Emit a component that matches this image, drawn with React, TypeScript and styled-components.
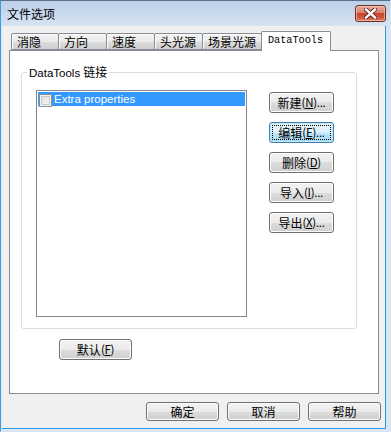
import React from "react";
import styled, { createGlobalStyle } from "styled-components";

const CJK = `"Noto Sans CJK SC", "Liberation Sans", sans-serif`;
const LATIN = `"Liberation Sans", "Noto Sans CJK SC", sans-serif`;
const MONO = `"Liberation Mono", "DejaVu Sans Mono", monospace`;

const GlobalStyle = createGlobalStyle`
  html, body { margin: 0; padding: 0; background: #ffffff; }
  body { font-family: ${CJK}; font-size: 12px; color: #000; }
  * { box-sizing: border-box; }
`;

const Window = styled.div`
  width: 391px;
  height: 432px;
  display: flex;
  flex-direction: column;
  border: 1px solid #5d6f86;
  border-left-color: #3d9ee4;
  border-right-color: #d8e4f1;
  border-bottom-color: #d8e4f1;
  background: linear-gradient(to bottom, #bcd0e7 0px, #d6e3f1 25px, #dbe6f2 100%);
`;

const TitleBar = styled.div`
  height: 25px;
  flex: none;
  display: flex;
  align-items: flex-start;
  padding: 0 4px 0 6px;
`;

const Title = styled.div`
  flex: 1;
  font-family: ${CJK};
  font-size: 12px;
  line-height: 25px;
  color: #000;
`;

const CloseButton = styled.div`
  width: 31px;
  height: 17px;
  margin-top: 4px;
  border: 1px solid #6f2e24;
  border-radius: 3px;
  background: linear-gradient(to bottom, #e9a898 0%, #d9806b 45%, #c7452c 50%, #cf5a3f 80%, #e28a6a 100%);
  box-shadow: inset 0 0 0 1px rgba(255, 220, 210, 0.55);
  display: flex;
  align-items: center;
  justify-content: center;
`;

const Client = styled.div`
  flex: 1;
  margin: 0 4px 2px 1px;
  background: #f0f0f0;
  display: flex;
  flex-direction: column;
  padding: 5px 6px 7px 7px;
  border-right: 1px solid #2f98e6;
  border-bottom: 1px solid #2f98e6;
`;

const TabStrip = styled.div`
  display: flex;
  align-items: flex-end;
  height: 19px;
  padding-left: 2px;
  flex: none;
`;

const Tab = styled.div<{ $w: number; $active?: boolean }>`
  width: ${(p) => p.$w}px;
  height: ${(p) => (p.$active ? 20 : 17)}px;
  margin-right: -1px;
  margin-bottom: ${(p) => (p.$active ? -1 : 0)}px;
  position: relative;
  z-index: ${(p) => (p.$active ? 2 : 1)};
  border: 1px solid #898c95;
  border-bottom: ${(p) => (p.$active ? "none" : "1px solid #898c95")};
  border-radius: 2px 2px 0 0;
  background: ${(p) =>
    p.$active
      ? "#ffffff"
      : "linear-gradient(to bottom, #f2f2f2 0%, #ebebeb 50%, #dddddd 50%, #cfcfcf 100%)"};
  box-shadow: ${(p) => (p.$active ? "none" : "inset 1px 1px 0 #fcfcfc")};
  padding-left: ${(p) => (p.$active ? 6 : 5)}px;
  font-family: ${(p) => (p.$active ? MONO : CJK)};
  font-size: ${(p) => (p.$active ? "10.2px" : "12px")};
  line-height: ${(p) => (p.$active ? "18px" : "15px")};
  white-space: nowrap;
  color: #000;
`;

const Panel = styled.div`
  flex: 1;
  border: 1px solid #898c95;
  background: #ffffff;
  display: flex;
  flex-direction: column;
  align-items: flex-start;
`;

const GroupBox = styled.div`
  position: relative;
  align-self: stretch;
  margin: 21px 21px 0 11px;
  border: 1px solid #d5dfe5;
  border-radius: 3px;
  padding: 17px 22px 11px 14px;
  display: flex;
  align-items: flex-start;
`;

const GroupTitle = styled.div`
  position: absolute;
  top: -9px;
  left: 5px;
  padding: 0 2px;
  background: #ffffff;
  font-family: ${LATIN};
  font-size: 11.5px;
  line-height: 15px;
  color: #000;
  white-space: nowrap;
`;

const GroupTitleCjk = styled.span`
  font-family: ${CJK};
  font-size: 12px;
`;

const ListBox = styled.div`
  width: 211px;
  height: 227px;
  border: 1px solid #828790;
  background: #ffffff;
  padding: 1px;
  flex: none;
`;

const ListRow = styled.div<{ $selected?: boolean }>`
  height: 14px;
  display: flex;
  align-items: center;
  background: ${(p) => (p.$selected ? "#3399ff" : "transparent")};
  color: ${(p) => (p.$selected ? "#ffffff" : "#000000")};
  font-family: ${LATIN};
  font-size: 11.5px;
  white-space: nowrap;
`;

const CheckBox = styled.span`
  width: 13px;
  height: 13px;
  margin: 2px 2px 0 1px;
  flex: none;
  border: 1px solid #8e8f8f;
  background: linear-gradient(135deg, #dcdcdc 0%, #fbfbfb 100%);
  box-shadow: inset 0 0 0 1px #f4f4f4, inset 0 0 0 2px #c8c8c8;
`;

const ButtonColumn = styled.div`
  margin-left: 22px;
  padding-top: 2px;
  display: flex;
  flex-direction: column;
  gap: 9px;
`;

const Button = styled.div<{ $w: number; $h: number; $focused?: boolean }>`
  width: ${(p) => p.$w}px;
  height: ${(p) => p.$h}px;
  border: 1px solid ${(p) => (p.$focused ? "#3c7fb1" : "#707070")};
  border-radius: 3px;
  background: ${(p) =>
    p.$focused
      ? "linear-gradient(to bottom, #eaf6fd 0%, #d9f0fc 50%, #bee6fd 50%, #a7d9f5 100%)"
      : "linear-gradient(to bottom, #f2f2f2 0%, #ebebeb 50%, #dddddd 50%, #cfcfcf 100%)"};
  box-shadow: inset 0 0 0 1px ${(p) => (p.$focused ? "#c4e5f6" : "#fcfcfc")};
  outline: ${(p) => (p.$focused ? "1px dotted #000" : "none")};
  outline-offset: -4px;
  display: flex;
  align-items: center;
  justify-content: center;
  font-family: ${CJK};
  font-size: 12px;
  line-height: 1;
  color: #000;
  white-space: nowrap;
  flex: none;
`;

const Mnemonic = styled.span`
  font-family: ${CJK};
  font-size: 11.5px;
  letter-spacing: -0.3px;
`;

const DefaultRow = styled.div`
  margin: 10px 0 0 49px;
`;

const BottomRow = styled.div`
  display: flex;
  justify-content: flex-end;
  gap: 8px;
  margin: 8px -2px 0 0;
  flex: none;
`;

const CloseIcon = () => (
  <svg width="13" height="11" viewBox="0 0 13 11">
    <path d="M2 1.5 L11 9.5 M11 1.5 L2 9.5" stroke="#5a2018" strokeWidth="4.2" strokeLinecap="square" />
    <path d="M2 1.5 L11 9.5 M11 1.5 L2 9.5" stroke="#ffffff" strokeWidth="2.4" strokeLinecap="square" />
  </svg>
);

const Label = ({ main, key_, dots }: { main: string; key_: string; dots?: boolean }) => (
  <>
    {main}
    <Mnemonic>
      (<u>{key_}</u>){dots ? "..." : ""}
    </Mnemonic>
  </>
);

const tabs = [
  { label: "消隐", w: 48 },
  { label: "方向", w: 49 },
  { label: "速度", w: 49 },
  { label: "头光源", w: 49 },
  { label: "场景光源", w: 60 },
];

export default function App() {
  return (
    <>
      <GlobalStyle />
      <Window>
        <TitleBar>
          <Title>文件选项</Title>
          <CloseButton>
            <CloseIcon />
          </CloseButton>
        </TitleBar>
        <Client>
          <TabStrip>
            {tabs.map((t) => (
              <Tab key={t.label} $w={t.w}>
                {t.label}
              </Tab>
            ))}
            <Tab $w={70} $active>
              DataTools
            </Tab>
          </TabStrip>
          <Panel>
            <GroupBox>
              <GroupTitle>
                DataTools <GroupTitleCjk>链接</GroupTitleCjk>
              </GroupTitle>
              <ListBox>
                <ListRow $selected>
                  <CheckBox />
                  Extra properties
                </ListRow>
              </ListBox>
              <ButtonColumn>
                <Button $w={65} $h={21}>
                  <Label main="新建" key_="N" dots />
                </Button>
                <Button $w={65} $h={21} $focused>
                  <Label main="编辑" key_="E" dots />
                </Button>
                <Button $w={65} $h={21}>
                  <Label main="删除" key_="D" />
                </Button>
                <Button $w={65} $h={21}>
                  <Label main="导入" key_="I" dots />
                </Button>
                <Button $w={65} $h={21}>
                  <Label main="导出" key_="X" dots />
                </Button>
              </ButtonColumn>
            </GroupBox>
            <DefaultRow>
              <Button $w={73} $h={21}>
                <Label main="默认" key_="F" />
              </Button>
            </DefaultRow>
          </Panel>
          <BottomRow>
            <Button $w={73} $h={19}>确定</Button>
            <Button $w={73} $h={19}>取消</Button>
            <Button $w={73} $h={19}>帮助</Button>
          </BottomRow>
        </Client>
      </Window>
    </>
  );
}
